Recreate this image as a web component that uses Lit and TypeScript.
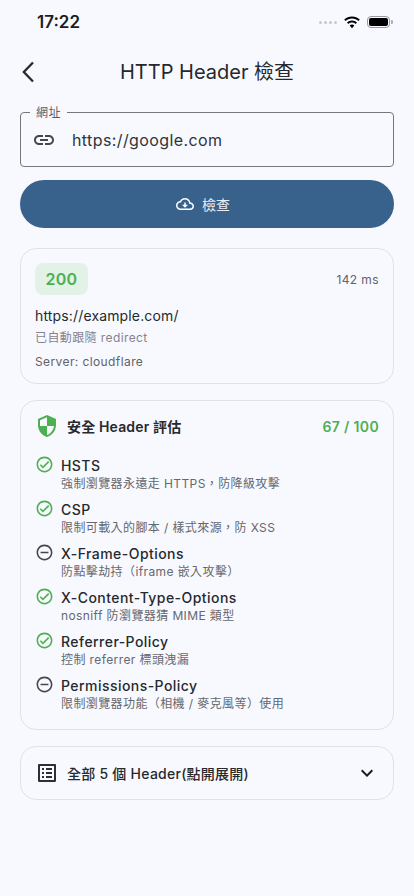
import { LitElement, html, css, svg } from "lit";
import { customElement } from "lit/decorators.js";

const items = [
  { n: "HSTS", d: "強制瀏覽器永遠走 HTTPS\uFF0C防降級攻擊", ok: true },
  { n: "CSP", d: "限制可載入的腳本 / 樣式來源\uFF0C防 XSS", ok: true },
  { n: "X-Frame-Options", d: "防點擊劫持\uFF08iframe 嵌入攻擊\uFF09", ok: false },
  { n: "X-Content-Type-Options", d: "nosniff 防瀏覽器猜 MIME 類型", ok: true },
  { n: "Referrer-Policy", d: "控制 referrer 標頭洩漏", ok: true },
  { n: "Permissions-Policy", d: "限制瀏覽器功能\uFF08相機 / 麥克風等\uFF09使用", ok: false },
];

const okIcon = svg`<path fill="#4caf50" d="M12 2C6.48 2 2 6.48 2 12s4.48 10 10 10 10-4.48 10-10S17.52 2 12 2zm0 18c-4.41 0-8-3.59-8-8s3.59-8 8-8 8 3.59 8 8-3.59 8-8 8zm4.59-12.42L10 14.17l-2.59-2.58L6 13l4 4 8-8z"/>`;
const minusIcon = svg`<path fill="#44474e" d="M7 11v2h10v-2H7zm5-9C6.48 2 2 6.48 2 12s4.48 10 10 10 10-4.48 10-10S17.52 2 12 2zm0 18c-4.41 0-8-3.59-8-8s3.59-8 8-8 8 3.59 8 8-3.59 8-8 8z"/>`;

@customElement("app-root")
export class AppRoot extends LitElement {
  static styles = css`
    :host {
      display: block;
      width: 414px;
      height: 896px;
      overflow: hidden;
      background: #f8f9ff;
      color: #191c20;
      font-family: Inter, "Noto Sans CJK TC", sans-serif;
    }
    .status {
      height: 44px;
      display: flex;
      align-items: center;
      justify-content: space-between;
      padding: 0 22px 0 37px;
      box-sizing: border-box;
    }
    .time { font-size: 17px; font-weight: 600; color: #1c1c1e; }
    .status-right { display: flex; align-items: center; gap: 6px; }
    .dots { display: flex; gap: 2px; }
    .dots i { width: 3px; height: 3px; border-radius: 50%; background: #c8c9ce; }
    .battery {
      width: 23px; height: 12px; box-sizing: border-box;
      border: 1.5px solid #9a9a9e; border-radius: 4px; padding: 1px;
      position: relative;
    }
    .battery b { display: block; width: 100%; height: 100%; background: #000; border-radius: 2px; }
    .battery::after {
      content: ""; position: absolute; right: -3.5px; top: 2.500px;
      width: 1.5px; height: 4px; background: #b0b0b4; border-radius: 0 1px 1px 0;
    }
    .status-right .battery { margin-right: 2px; }
    .appbar {
      height: 56px;
      box-sizing: border-box;
      padding-bottom: 4px;
      display: flex;
      align-items: center;
      position: relative;
      justify-content: center;
    }
    .back { position: absolute; left: 16px; top: 16px; width: 24px; height: 24px; }
    .title { font-size: 20px; color: #25282c; font-weight: 400; }
    .main { padding: 12px 20px 0; display: flex; flex-direction: column; }
    .field {
      position: relative;
      height: 55px;
      box-sizing: border-box;
      border: 1px solid #74777f;
      border-radius: 4px;
      display: flex;
      align-items: center;
      padding-left: 11px;
      gap: 16px;
    }
    .field label {
      position: absolute;
      left: 9px; top: -7px;
      padding: 0 6px;
      background: #f8f9ff;
      font-size: 12px; line-height: 14px;
      letter-spacing: 0.4px;
      color: #5a5d64;
    }
    .field span { font-size: 16px; letter-spacing: 0.4px; color: #30333a; }
    .btn {
      margin-top: 13px;
      height: 48px;
      border-radius: 24px;
      background: #38618c;
      color: #e8edf3;
      display: flex; align-items: center; justify-content: center;
      gap: 8px;
      padding-right: 8px;
      box-sizing: border-box;
      font-size: 14px; letter-spacing: 0.1px; font-weight: 400;
    }
    .card {
      border: 1px solid #e1e2e8;
      border-radius: 16px;
      box-sizing: border-box;
      padding: 14px;
    }
    .c1 { margin-top: 20px; height: 136px; }
    .row { display: flex; align-items: center; justify-content: space-between; }
    .badge {
      width: 53px; height: 32px; border-radius: 8px;
      background: #e3f2e6; color: #4caf50;
      display: flex; align-items: center; justify-content: center;
      font-size: 16px; font-weight: 600; letter-spacing: 0.3px;
    }
    .ms { font-size: 12px; letter-spacing: 0.4px; color: #5f6268; }
    .url { margin-top: 11px; font-size: 14px; line-height: 20px; letter-spacing: 0.15px; color: #26292d; }
    .redir { margin-top: 4px; font-size: 12px; line-height: 16px; letter-spacing: 0.4px; color: #85828e; }
    .server { margin-top: 8px; font-size: 12px; line-height: 16px; letter-spacing: 0.4px; color: #5f6268; }
    .c2 { margin-top: 16px; height: 330px; }
    .c2-head { height: 24px; display: flex; align-items: center; gap: 8px; margin-top: -1px; }
    .c2-title { flex: 1; font-size: 14px; font-weight: 600; letter-spacing: 0.15px; color: #26292d; }
    .score { font-size: 14px; font-weight: 600; letter-spacing: 0.35px; color: #4caf50; }
    .list { margin-top: 18px; display: flex; flex-direction: column; gap: 8px; }
    .item { display: flex; gap: 7px; height: 36px; }
    .item svg { flex: none; margin-top: -1px; }
    .item-name { font-size: 14px; font-weight: 500; line-height: 20px; letter-spacing: 0.45px; color: #26292d; }
    .item-desc { font-size: 12px; line-height: 16px; letter-spacing: 0.4px; color: #65686e; }
    .c3 {
      margin-top: 16px; height: 54px; padding: 0 14px;
      display: flex; align-items: center; gap: 8px;
    }
    .c3-title { flex: 1; font-size: 14px; font-weight: 500; letter-spacing: 0.25px; color: #26292d; }
  `;

  render() {
    return html`
      <div class="status">
        <span class="time">17:22</span>
        <div class="status-right">
          <div class="dots"><i></i><i></i><i></i><i></i></div>
          <svg width="18" height="13" viewBox="0 0 18 13"><path fill="#000" d="M9 2.4c2.5 0 4.800 1 6.500 2.600l1.300-1.400C14.700 1.600 12 .4 9 .4S3.300 1.600 1.200 3.600L2.500 5C4.200 3.400 6.500 2.400 9 2.400zm0 4c1.400 0 2.700.5 3.700 1.500L14 6.500C12.700 5.200 10.900 4.400 9 4.400s-3.700.8-5 2.100l1.300 1.400c1-1 2.300-1.500 3.700-1.500zM9 8.600c-.9 0-1.700.4-2.300.9L9 12.200l2.300-2.700c-.6-.5-1.400-.9-2.300-.9z"/></svg>
          <div class="battery"><b></b></div>
        </div>
      </div>
      <div class="appbar">
        <svg class="back" viewBox="0 0 24 24"><path fill="none" stroke="#25282c" stroke-width="2.300" d="M17 2.500 7.800 12l9.200 9.500"/></svg>
        <span class="title">HTTP Header 檢查</span>
      </div>
      <div class="main">
        <div class="field">
          <label>網址</label>
          <svg width="24" height="24" viewBox="0 0 24 24"><path fill="#44474e" d="M3.900 12c0-1.710 1.390-3.100 3.100-3.100h4V7H7c-2.760 0-5 2.240-5 5s2.240 5 5 5h4v-1.900H7c-1.710 0-3.100-1.390-3.100-3.100zM8 13h8v-2H8v2zm9-6h-4v1.900h4c1.710 0 3.100 1.390 3.100 3.100s-1.390 3.100-3.100 3.100h-4V17h4c2.760 0 5-2.240 5-5s-2.240-5-5-5z"/></svg>
          <span>https://google.com</span>
        </div>
        <div class="btn">
          <svg width="18" height="18" viewBox="0 0 24 24"><path fill="#fff" d="M19.350 10.040C18.670 6.590 15.640 4 12 4 9.110 4 6.600 5.640 5.350 8.040 2.340 8.360 0 10.910 0 14c0 3.310 2.690 6 6 6h13c2.760 0 5-2.240 5-5 0-2.640-2.050-4.780-4.650-4.960zM19 18H6c-2.210 0-4-1.790-4-4 0-2.050 1.530-3.760 3.560-3.970l1.070-.11.500-.95C8.080 7.140 9.940 6 12 6c2.620 0 4.880 1.860 5.390 4.430l.3 1.500 1.530.11c1.560.1 2.780 1.410 2.780 2.960 0 1.650-1.350 3-3 3zM13 13v-3h-2v3H8l4 4 4-4h-3z"/></svg>
          <span>檢查</span>
        </div>
        <div class="card c1">
          <div class="row"><div class="badge">200</div><span class="ms">142 ms</span></div>
          <div class="url">https://example.com/</div>
          <div class="redir">已自動跟隨 redirect</div>
          <div class="server">Server: cloudflare</div>
        </div>
        <div class="card c2">
          <div class="c2-head">
            <svg width="24" height="24" viewBox="0 0 24 24"><path fill="#4caf50" d="M12 1 3 5v6c0 5.550 3.840 10.740 9 12 5.160-1.260 9-6.450 9-12V5l-9-4zm0 10.990h7c-.53 4.120-3.280 7.790-7 8.940V12H5V6.300l7-3.110v8.800z"/></svg>
            <span class="c2-title">安全 Header 評估</span>
            <span class="score">67 / 100</span>
          </div>
          <div class="list">
            ${items.map(
              (i) => html`<div class="item">
                <svg width="19" height="19" viewBox="0 0 24 24">${i.ok ? okIcon : minusIcon}</svg>
                <div>
                  <div class="item-name">${i.n}</div>
                  <div class="item-desc">${i.d}</div>
                </div>
              </div>`
            )}
          </div>
        </div>
        <div class="card c3">
          <svg width="24" height="24" viewBox="0 0 24 24"><path fill="#2c2f33" d="M19 5v14H5V5h14m1.100-2H3.900c-.5 0-.9.4-.9.900v16.200c0 .4.400.900.900.900h16.200c.4 0 .900-.5.900-.9V3.900c0-.5-.5-.9-.9-.9zM11 7h6v2h-6V7zm0 4h6v2h-6v-2zm0 4h6v2h-6v-2zM7 7h2v2H7V7zm0 4h2v2H7v-2zm0 4h2v2H7v-2z"/></svg>
          <span class="c3-title">全部 5 個 Header(點開展開)</span>
          <svg width="24" height="24" viewBox="0 0 24 24"><path fill="#191c20" d="M16.590 8.590 12 13.170 7.410 8.590 6 10l6 6 6-6z"/></svg>
        </div>
      </div>
    `;
  }
}
